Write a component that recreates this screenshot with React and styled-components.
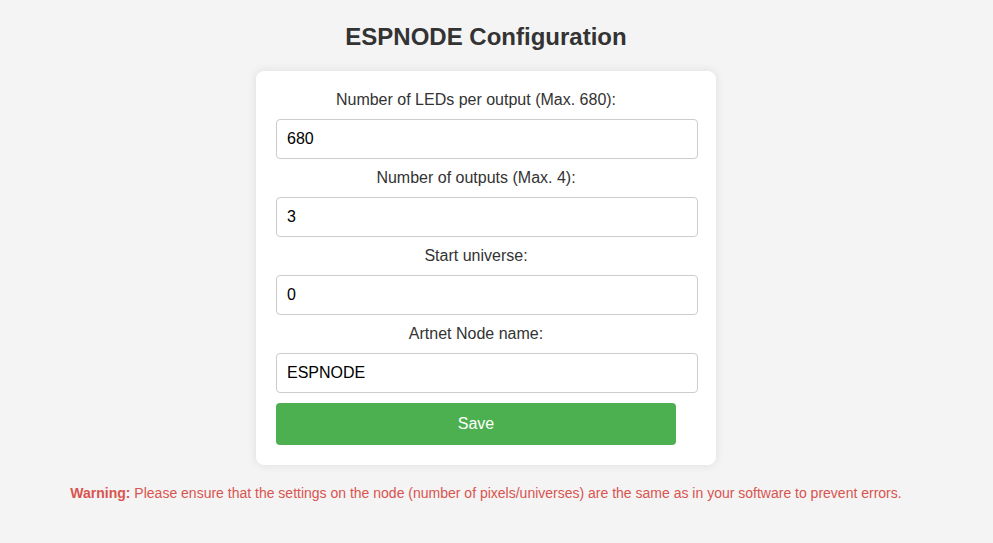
import React from "react";
import styled, { createGlobalStyle } from "styled-components";

const Global = createGlobalStyle`
  html, body { margin: 0; padding: 0; background: #f4f4f4; }
  body { font-family: "Liberation Sans", Arial, sans-serif; color: #333; }
`;

const Page = styled.div`
  padding: 23px 21px 20px 0;
  display: flex;
  flex-direction: column;
  align-items: center;
`;

const Title = styled.h1`
  margin: 0 0 20px;
  font-size: 24px;
  line-height: 28px;
  font-weight: bold;
  color: #333;
`;

const Card = styled.form`
  box-sizing: border-box;
  width: 460px;
  padding: 20px;
  background: #fff;
  border-radius: 8px;
  box-shadow: 0 0 10px rgba(0, 0, 0, 0.1);
  display: flex;
  flex-direction: column;
  gap: 10px;
`;

const Label = styled.label`
  display: block;
  width: 400px;
  font-size: 16px;
  line-height: 18px;
  text-align: center;
  color: #333;
`;

const Input = styled.input`
  box-sizing: border-box;
  width: 422px;
  height: 40px;
  padding: 0 10px;
  font-family: "Liberation Sans", Arial, sans-serif;
  font-size: 16px;
  color: #000;
  background: #fff;
  border: 1px solid #ccc;
  border-radius: 4px;
  outline: none;
`;

const Button = styled.button`
  width: 400px;
  height: 42px;
  border: none;
  border-radius: 4px;
  background: #4caf50;
  color: #fff;
  font-family: "Liberation Sans", Arial, sans-serif;
  font-size: 16px;
  cursor: pointer;
`;

const Warning = styled.p`
  margin: 20px 0 0;
  font-size: 14px;
  line-height: 16px;
  color: #d9534f;
  text-align: center;
`;

const fields = [
  ["Number of LEDs per output (Max. 680):", "680"],
  ["Number of outputs (Max. 4):", "3"],
  ["Start universe:", "0"],
  ["Artnet Node name:", "ESPNODE"],
];

export default function App() {
  return (
    <>
      <Global />
      <Page>
        <Title>ESPNODE Configuration</Title>
        <Card onSubmit={(e) => e.preventDefault()}>
          {fields.map(([label, value]) => (
            <React.Fragment key={label}>
              <Label>{label}</Label>
              <Input defaultValue={value} />
            </React.Fragment>
          ))}
          <Button type="submit">Save</Button>
        </Card>
        <Warning>
          <strong>Warning:</strong> Please ensure that the settings on the node (number of pixels/universes) are the same as in your software to prevent errors.
        </Warning>
      </Page>
    </>
  );
}
